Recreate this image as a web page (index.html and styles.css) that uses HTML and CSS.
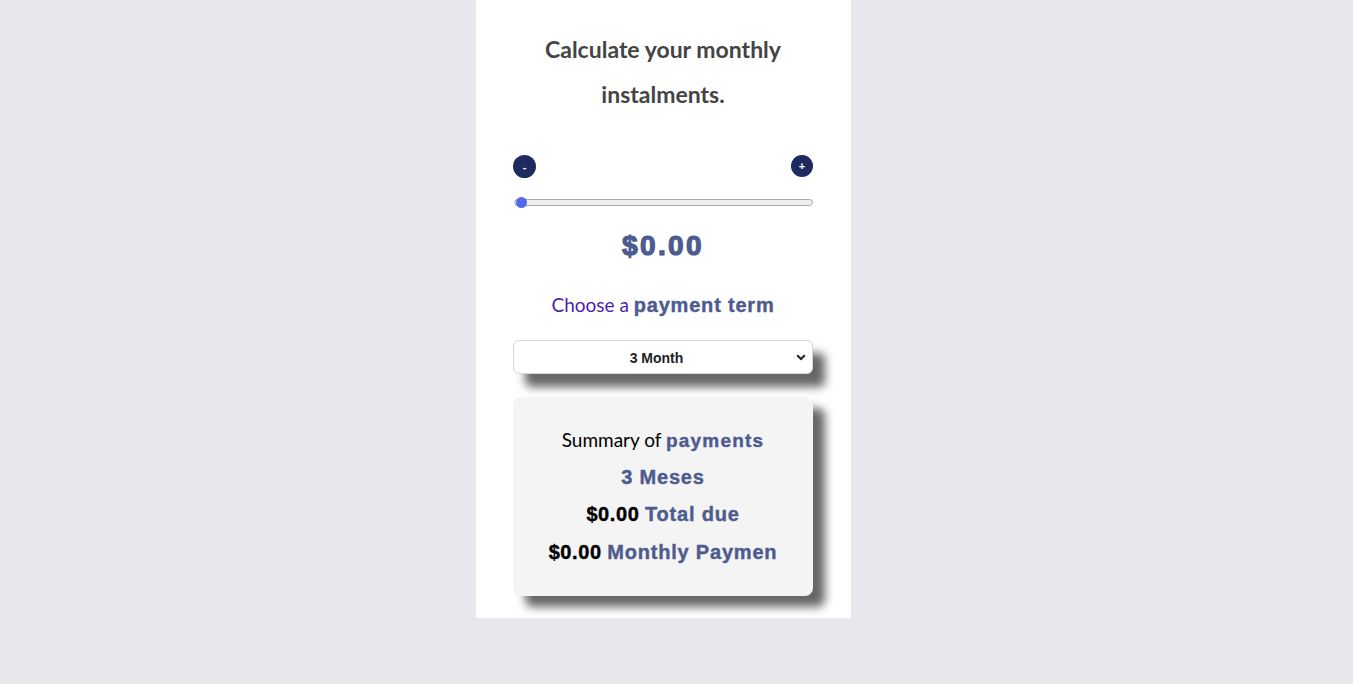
FILE: index.html
```html
<!DOCTYPE html>
<html lang="en">
<head>
<meta charset="utf-8">
<title>Calculator</title>
<link rel="stylesheet" href="styles.css">
</head>
<body>
<main class="panel">
  <h1 class="title">Calculate your monthly instalments.</h1>
  <div class="stepper">
    <button class="step">-</button>
    <button class="step">+</button>
  </div>
  <div class="slider"><span class="thumb"></span></div>
  <div class="amount">$0.00</div>
  <h2 class="choose">Choose a <b class="accent">payment term</b></h2>
  <div class="select">
    <span class="select-text">3 Month</span>
    <svg class="chev" width="10" height="7" viewBox="0 0 10 7"><path d="M1.2 1.2 L5 5 L8.8 1.2" fill="none" stroke="#222" stroke-width="2"/></svg>
  </div>
  <section class="summary">
    <p class="sum-title">Summary of <b class="accent">payments</b></p>
    <p class="sum-line first accent">3 Meses</p>
    <p class="sum-line"><b class="black">$0.00</b> <b class="accent">Total due</b></p>
    <p class="sum-line"><b class="black">$0.00</b> <b class="accent">Monthly Paymen</b></p>
  </section>
</main>
</body>
</html>
```
FILE: styles.css
```css
html, body {
  margin: 0;
  padding: 0;
  background: #e7e8eb;
  height: 100%;
}
body {
  font-family: "Liberation Sans", Arial, sans-serif;
}
.panel {
  box-sizing: border-box;
  width: 375px;
  height: 618px;
  margin-left: 476px;
  background: #fff;
  padding: 27px 38px 0 37px;
  display: flex;
  flex-direction: column;
  align-items: stretch;
}
.title {
  margin: 0;
  font-family: Lato, sans-serif;
  font-weight: 700;
  font-size: 23px;
  line-height: 45px;
  color: #444;
  text-align: center;
  padding: 0 20px;
}
.stepper {
  display: flex;
  justify-content: space-between;
  margin-top: 38px;
  height: 23px;
}
.step {
  width: 23px;
  height: 23px;
  border-radius: 50%;
  border: none;
  background: #1f2a60;
  color: #fff;
  font-family: "Liberation Sans", Arial, sans-serif;
  font-weight: 700;
  font-size: 11px;
  padding: 0;
  display: flex;
  align-items: center;
  justify-content: center;
}
.step:last-child { width: 22px; height: 22px; }
.slider {
  position: relative;
  margin: 21px 0 0 1px;
  height: 5px;
  border: 1px solid #aaa;
  border-radius: 4px;
  background: #efefef;
}
.thumb {
  position: absolute;
  left: 1px;
  top: -3px;
  width: 11px;
  height: 11px;
  border-radius: 50%;
  background: #5468f0;
}
.amount {
  margin-top: 20px;
  text-align: center;
  font-weight: 700;
  font-size: 28px;
  line-height: 40px;
  letter-spacing: 2.4px;
  color: #4e5b8f;
  -webkit-text-stroke: 1.2px #4e5b8f;
}
.choose {
  margin: 26px 0 0;
  text-align: center;
  font-family: Lato, sans-serif;
  font-weight: 400;
  font-size: 19px;
  line-height: 26px;
  color: #4c1eae;
}
.accent {
  font-family: "Liberation Sans", Arial, sans-serif;
  font-weight: 700;
  color: #4e5b8f;
  letter-spacing: 0.8px;
  -webkit-text-stroke: 0.4px #4e5b8f;
}
.choose .accent { font-size: 20px; }
.select {
  position: relative;
  margin-top: 22px;
  height: 32px;
  border: 1px solid #d5d5d5;
  border-radius: 6px;
  background: #fff;
  display: flex;
  align-items: center;
  justify-content: center;
  box-shadow: 12px 13px 10px rgba(0,0,0,0.6);
}
.select-text {
  font-weight: 700;
  font-size: 14px;
  color: #222;
  margin-left: -13px;
  padding-top: 1px;
}
.chev {
  position: absolute;
  right: 6px;
  top: 13px;
}
.summary {
  margin-top: 23px;
  height: 199px;
  box-sizing: border-box;
  background: #f4f4f4;
  border-radius: 8px;
  box-shadow: 12px 11px 10px rgba(0,0,0,0.6);
  padding-top: 30px;
  text-align: center;
}
.summary p { margin: 0; }
.sum-title {
  font-family: Lato, sans-serif;
  font-size: 19px;
  line-height: 26px;
  color: #000;
}
.sum-title .accent { font-size: 19px; letter-spacing: 1.2px; }
.sum-line {
  font-size: 20px;
  line-height: 26px;
  margin-top: 11.5px !important;
}
.sum-line.first { margin-top: 9.5px !important; }
.black {
  color: #000;
  letter-spacing: 0.6px;
  -webkit-text-stroke: 0.4px #000;
}
```
